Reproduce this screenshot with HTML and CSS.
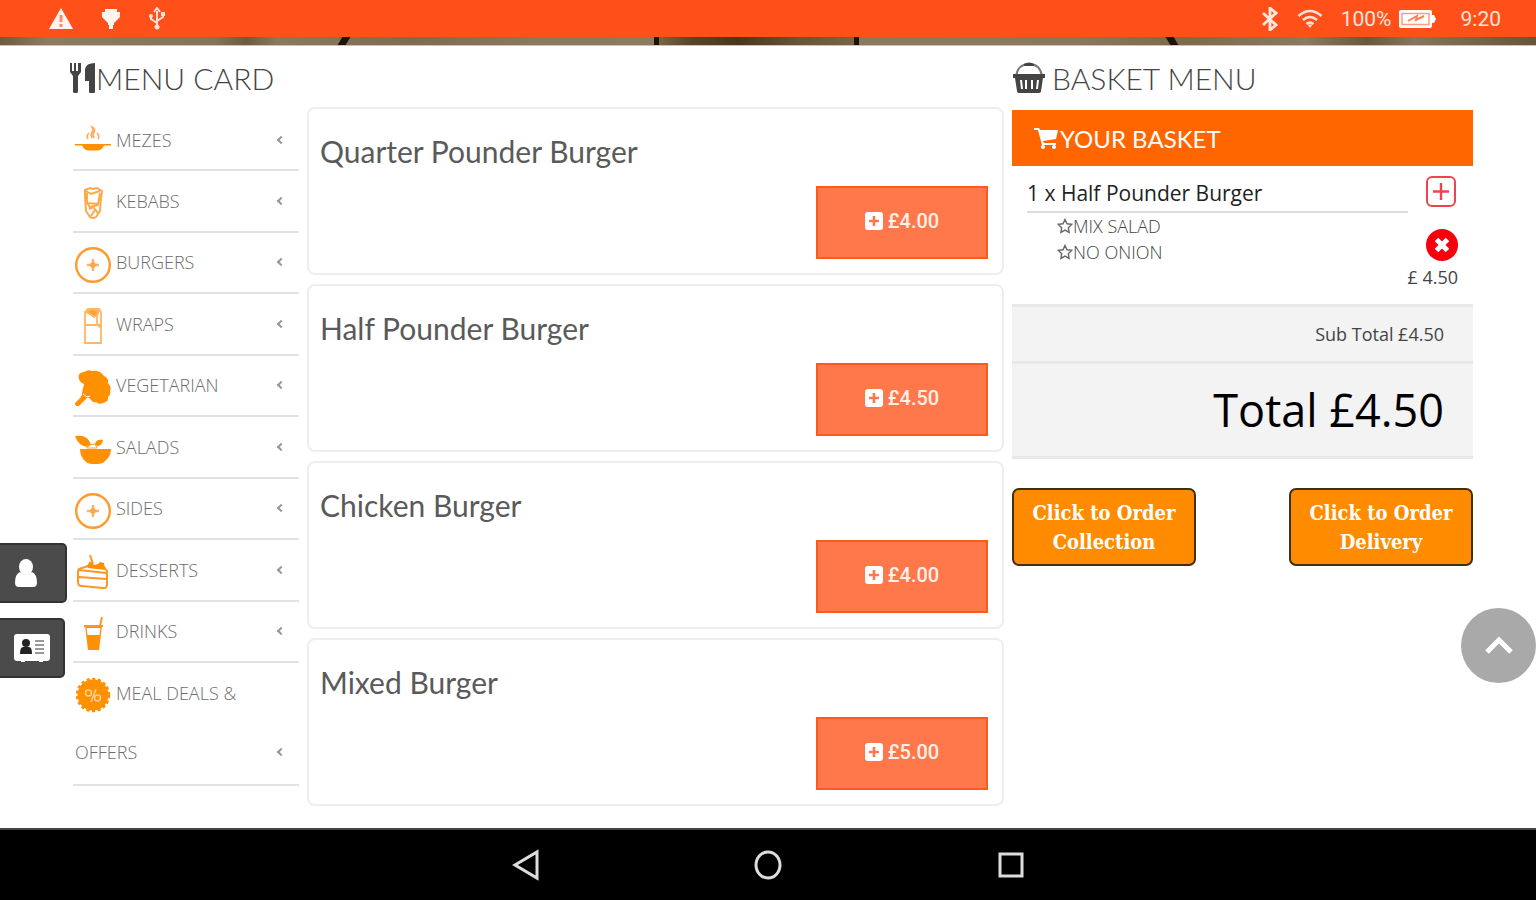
FILE: index.html
```html
<!DOCTYPE html>
<html lang="en">
<head>
  <meta charset="UTF-8">
  <meta name="viewport" content="width=device-width, initial-scale=1.0">
  <title>Menu Card</title>
  <link rel="stylesheet" href="styles.css">
</head>
<body>
  <!-- Shared icons -->
  <svg class="sprite" aria-hidden="true">
    <symbol id="icon-add" viewBox="0 0 18 18">
      <path fill-rule="evenodd" d="M3 0h12a3 3 0 0 1 3 3v12a3 3 0 0 1-3 3H3a3 3 0 0 1-3-3V3a3 3 0 0 1 3-3zM7.700 4v3.700H4v2.600h3.700V14h2.600v-3.700H14V7.700h-3.700V4z"/>
    </symbol>
    <symbol id="icon-circle-plus" viewBox="0 0 36 36">
      <circle cx="18" cy="18" r="16.800" fill="none" stroke="#ff9a2e" stroke-width="2.400"/>
      <path d="M18 12v12M12 18h12" stroke="#ffb566" stroke-width="2.600"/>
      <path d="M18 14l4 4-4 4-4-4z" fill="#ffa94d"/>
    </symbol>
    <symbol id="icon-star" viewBox="0 0 16 16">
      <path d="M8 1.500l2 4.300 4.700.6-3.400 3.300.8 4.700L8 12.100l-4.100 2.300.8-4.700L1.300 6.400 6 5.800z" fill="none" stroke="#666" stroke-width="1.400"/>
    </symbol>
  </svg>

  <header class="status-bar">
    <div class="status-left">
      <svg width="26" height="24" viewBox="0 0 26 24"><path d="M13 1l12 21H1z" fill="#fff4f0"/><path d="M13 8v7M13 17v3" stroke="#ff8a66" stroke-width="3"/></svg>
      <svg width="18" height="24" viewBox="0 0 18 24"><path d="M3 2h12v3h3v5l-6 6v2h-1v4H7v-4H6v-2l-6-6V5h3z" fill="#fff4f0"/></svg>
      <svg width="18" height="24" viewBox="0 0 18 24" fill="none" stroke="#ffe3d9" stroke-width="2"><path d="M9 20V4M6 5l3-4 3 4M3 8v4l6 4M15 6v4l-6 4"/><circle cx="9" cy="20" r="2.500" fill="#ffe3d9" stroke="none"/><circle cx="3" cy="9" r="2" fill="#ffe3d9" stroke="none"/><path d="M13 5h4v4h-4z" fill="#ffe3d9" stroke="none"/></svg>
    </div>
    <div class="status-right">
      <svg width="18" height="24" viewBox="0 0 18 24"><path d="M2 6l13 12-6 5V1l6 5L2 18" fill="none" stroke="#ffe9e1" stroke-width="2.800"/></svg>
      <svg width="26" height="20" viewBox="0 0 26 20" fill="none" stroke="#ffe3d9" stroke-width="2.600"><path d="M1.500 7Q13-3 24.500 7M6 11q7-6 14 0M9.500 15q3.500-3 7 0"/><path d="M10.500 15.500h5L13 19z" fill="#ffe3d9" stroke="none"/></svg>
      <span class="battery">100%
        <svg width="39" height="20" viewBox="0 0 39 20"><path d="M3 1h29a2 2 0 0 1 2 2v3h2l2 4-2 4h-2v3a2 2 0 0 1-2 2H3a2 2 0 0 1-2-2V3a2 2 0 0 1 2-2z" fill="#fff"/><path d="M4 4.500h27v11H4z" fill="none" stroke="#ff9c7d" stroke-width="1.500"/><path d="M10 12l9-5-1 4 8-4" stroke="#ff7f55" stroke-width="2" fill="none"/></svg>
      </span>
      <span class="clock">9:20</span>
    </div>
  </header>
  <div class="wood">
    <i class="plank-gap left"></i><i class="plank-gap right"></i>
  </div>

  <main class="page">
    <section class="menu">
      <h2 class="section-title">
        <svg width="26" height="30" viewBox="0 0 26 30" fill="#444"><path d="M0 0h2v8h2V0h2v8h2V0h3v9l-3 4v15a2 2 0 0 1-5 0V13L0 9z"/><path d="M25 0v28a2 2 0 0 1-6 0V18h-4V6q1-6 10-6z"/></svg>MENU CARD
      </h2>
      <nav>
        <ul class="menu-list">
          <li><a href="#">
            <svg class="menu-icon" viewBox="0 0 36 36"><path d="M0 20h36v1.600H0zM7 21.600h22q-2 5-7 5h-8q-5 0-7-5z" fill="#ff9100"/><path d="M13 15q-2-3 1-6M17 14q-2-5 1-7 0-2-1-4 4 2 2 5-2 3 0 6M23 15q2-3-1-6" fill="none" stroke="#ffab57" stroke-width="1.600"/></svg>
            <span>MEZES</span><b class="arrow"></b></a></li>
          <li><a href="#">
            <svg class="menu-icon" viewBox="0 0 36 36" fill="none" stroke="#ffa94d" stroke-width="2"><path d="M10 5l5-2 3 1 4-1 5 3-1 7-1 13-4 6q-3 2-6 0l-4-6-1-13zM11 6l5 3 9-3M12 18l12 1M12 8v10l3 4 8-2 2-12M14 24l4-2 5 6M16 31l4-6"/></svg>
            <span>KEBABS</span><b class="arrow"></b></a></li>
          <li><a href="#">
            <svg class="menu-icon"><use href="#icon-circle-plus"/></svg>
            <span>BURGERS</span><b class="arrow"></b></a></li>
          <li><a href="#">
            <svg class="menu-icon" viewBox="0 0 36 36" fill="none" stroke="#ffb763" stroke-width="1.800"><path d="M10 17V4l3-3h11l2 3v31H10zM10 17h16M22 7v9l4 4"/><path d="M11 4l5-3 8 2-2 4-3 2-4-3z" fill="#ffa32f"/></svg>
            <span>WRAPS</span><b class="arrow"></b></a></li>
          <li><a href="#">
            <svg class="menu-icon" viewBox="0 0 36 36" fill="#ff9100"><path d="M4 9q-2-6 5-7 4-3 8-1 8-1 12 5 5 2 4 7 4 4 2 8 1 4-2 6 1 5-5 6-4 2-7-1-3 1-5-2l-3-3-8 8q-2 2-4 1-2-2 0-4 7-6 6-9l2-9q-4-1-5-5z"/><path d="M8 24l4 3 3-1" stroke="#fff" fill="none"/></svg>
            <span>VEGETARIAN</span><b class="arrow"></b></a></li>
          <li><a href="#">
            <svg class="menu-icon" viewBox="0 0 36 36" fill="#ff9100"><path d="M5 18h31q0 8-7 13-2 2-9 2t-9-2q-6-5-6-13z"/><path d="M0 5q13-2 16 9l-3 2Q3 15 0 5zM20 14q0-6 8-5-1 6-6 6z"/><path d="M13 14l7-1 2 4H12z" fill="none" stroke="#ffa32f"/></svg>
            <span>SALADS</span><b class="arrow"></b></a></li>
          <li><a href="#">
            <svg class="menu-icon"><use href="#icon-circle-plus"/></svg>
            <span>SIDES</span><b class="arrow"></b></a></li>
          <li><a href="#">
            <svg class="menu-icon" viewBox="0 0 36 36" fill="none" stroke="#ff9624" stroke-width="2"><path d="M4 15l9-3 16 1 3 4v14q-1 4-4 3L7 32q-4 0-4-4V17zM4 16l27 3M4 23l27 2"/><path d="M12 12l3-5 4 4 4-1 2-2 4 1 1 7-17-2z" fill="#ff9100" stroke="none"/><path d="M18 10L15 1"/></svg>
            <span>DESSERTS</span><b class="arrow"></b></a></li>
          <li><a href="#">
            <svg class="menu-icon" viewBox="0 0 36 36"><path d="M10 10h17l-3 24H13z" fill="#ff9100"/><path d="M11.500 12h14l-1 7h-12z" fill="#fff"/><path d="M9 10h19M25 10l2-9" fill="none" stroke="#ff9624" stroke-width="2"/></svg>
            <span>DRINKS</span><b class="arrow"></b></a></li>
          <li class="tall"><a href="#">
            <svg class="menu-icon" viewBox="0 0 36 36"><circle cx="18" cy="18" r="15.500" fill="#ff9100"/><circle cx="18" cy="18" r="16" fill="none" stroke="#ff9100" stroke-width="2.500" stroke-dasharray="3.200 2.500"/><path d="M21 12l-5 13" stroke="#ffd19b" stroke-width="1.500"/><circle cx="13.500" cy="16" r="3" fill="none" stroke="#ffd19b" stroke-width="1.500"/><circle cx="22.500" cy="21" r="3" fill="none" stroke="#ffd19b" stroke-width="1.500"/></svg>
            <span>MEAL DEALS &amp;</span>
            <span class="second">OFFERS</span><b class="arrow"></b></a></li>
        </ul>
      </nav>
    </section>

    <section class="products">
      <article class="product">
        <h3>Quarter Pounder Burger</h3>
        <button type="button" class="price"><svg><use href="#icon-add"/></svg>£4.00</button>
      </article>
      <article class="product">
        <h3>Half Pounder Burger</h3>
        <button type="button" class="price"><svg><use href="#icon-add"/></svg>£4.50</button>
      </article>
      <article class="product">
        <h3>Chicken Burger</h3>
        <button type="button" class="price"><svg><use href="#icon-add"/></svg>£4.00</button>
      </article>
      <article class="product">
        <h3>Mixed Burger</h3>
        <button type="button" class="price"><svg><use href="#icon-add"/></svg>£5.00</button>
      </article>
    </section>

    <aside class="basket">
      <h2 class="section-title">
        <svg width="34" height="32" viewBox="0 0 34 32"><path d="M4 14Q6 2 17 2t13 12" fill="none" stroke="#777" stroke-width="2"/><path d="M12 2q5-3 10 0v2H12z" fill="#444"/><path fill-rule="evenodd" d="M1 12h32v4h-2l-2 13q0 2-3 2H8q-3 0-3-2L3 16H1zM8 18l1 9h2l-1-9zM13 18v9h2v-9zM19 18v9h2v-9zM25 18l-1 9h2l1-9z" fill="#444"/></svg>
        BASKET MENU
      </h2>
      <h3 class="basket-head">
        <svg width="24" height="22" viewBox="0 0 24 22" fill="#fff"><path d="M0 1h5l1 2h18l-2 9-13 2 1 2h12v2H8L4 3H0z"/><circle cx="9" cy="20" r="2"/><circle cx="20" cy="20" r="2"/></svg>
        YOUR BASKET
      </h3>
      <div class="basket-item">
        <div class="item-text">
          <p class="item-name">1 x Half Pounder Burger</p>
          <ul class="item-options">
            <li><svg><use href="#icon-star"/></svg>MIX SALAD</li>
            <li><svg><use href="#icon-star"/></svg>NO ONION</li>
          </ul>
        </div>
        <div class="item-actions">
          <button type="button" aria-label="Add one"><svg width="32" height="32" viewBox="0 0 32 32" fill="none" stroke="#f0424f" stroke-width="2"><rect x="1" y="1" width="28" height="29" rx="5"/><path d="M15 7v17M7 15.500h16" stroke-width="2.400"/></svg></button>
          <button type="button" aria-label="Remove"><svg width="32" height="32" viewBox="0 0 32 32"><circle cx="16" cy="16" r="16" fill="#f5000c"/><path d="M10.500 10.500l11 11M21.500 10.500l-11 11" stroke="#fff" stroke-width="5"/></svg></button>
          <span class="item-price">£ 4.50</span>
        </div>
      </div>
      <div class="sub-total">Sub Total £4.50</div>
      <div class="total">Total £4.50</div>
      <div class="order-buttons">
        <button type="button">Click to Order Collection</button>
        <button type="button">Click to Order Delivery</button>
      </div>
    </aside>
  </main>

  <div class="side-tabs">
    <a href="#" aria-label="Account"><svg width="24" height="28" viewBox="0 0 24 28" fill="#fff"><ellipse cx="12" cy="8" rx="7" ry="8"/><path d="M6 13q6 5 12 0 5 2 5 11 0 4-4 4H5q-4 0-4-4 0-9 5-11z"/></svg></a>
    <a href="#" class="contact" aria-label="Contact"><svg width="36" height="28" viewBox="0 0 36 28"><path d="M3 0h30a3 3 0 0 1 3 3v21a3 3 0 0 1-3 3h-4v1h-4v-1H11v1H7v-1H3a3 3 0 0 1-3-3V3a3 3 0 0 1 3-3z" fill="#fff"/><circle cx="12" cy="9" r="4" fill="#222"/><path d="M6 20q0-7 3-7h6q3 0 3 7z" fill="#222"/><path d="M21 7h9M21 11h9M21 15h9M21 19h9" stroke="#999" stroke-width="2"/></svg></a>
  </div>
  <a href="#" class="to-top" aria-label="Back to top"><svg width="30" height="20" viewBox="0 0 30 20"><path d="M3 16L15 4l12 12" fill="none" stroke="#fff" stroke-width="5"/></svg></a>

  <footer class="nav-bar">
    <button type="button" aria-label="Back"><svg width="30" height="32" viewBox="0 0 30 32"><path d="M27 3v26L5 16z"/></svg></button>
    <button type="button" aria-label="Home"><svg width="30" height="32" viewBox="0 0 30 32"><ellipse cx="15" cy="16" rx="12" ry="13"/></svg></button>
    <button type="button" aria-label="Recent"><svg width="30" height="32" viewBox="0 0 30 32"><rect x="4" y="5" width="22" height="22"/></svg></button>
  </footer>
</body>
</html>
```
FILE: styles.css
```css
* {
  box-sizing: border-box;
}

body {
  margin: 0;
  min-height: 100vh;
  display: flex;
  flex-direction: column;
  background: #fff;
  color: #444;
  font-family: "Open Sans", sans-serif;
}

h2, h3, p, ul {
  margin: 0;
  padding: 0;
  font-weight: 400;
}

ul {
  list-style: none;
}

a {
  color: inherit;
  text-decoration: none;
}

button {
  cursor: pointer;
}

.sprite {
  position: absolute;
  width: 0;
  height: 0;
}

/* Status bar */
.status-bar {
  height: 37px;
  padding: 0 35px 0 48px;
  display: flex;
  align-items: center;
  justify-content: space-between;
  background: #ff5019;
  color: #ffe3d9;
  font: 21px Roboto, sans-serif;
}

.status-left, .status-right, .battery {
  display: flex;
  align-items: center;
}

.status-left {
  gap: 28px;
}

.status-right {
  gap: 18px;
}

.battery {
  gap: 6px;
}

.clock {
  margin-left: 6px;
}

.wood {
  height: 9px;
  display: flex;
  justify-content: space-between;
  padding: 0 360px 0 340px;
  border-bottom: 1px solid #c9c2b8;
  background: linear-gradient(90deg, #6f5a40, #8d7a61 3%, #85735c 14%, #6e5a41 16%, #8a7861 18%, #7f6b50 27%, #8b7860 35%, #8c7a62 42.6%, #1c130b 42.6%, #1c130b 42.9%, #7a6346 42.9%, #5a4329 45%, #4a3520 48%, #6a5338 52%, #7a6346 55.6%, #1c130b 55.6%, #1c130b 55.9%, #8b7860 55.9%, #8a775e 70%, #80694a 77%, #8a7963 85%, #6b573f 89%, #85745f 92%, #6a5439);
}

.plank-gap {
  width: 8px;
  background: #1c130b;
}

.plank-gap.left {
  transform: skewX(-30deg);
}

.plank-gap.right {
  transform: skewX(30deg);
}

/* Page columns */
.page {
  flex: 1;
  display: grid;
  grid-template-columns: 226fr 697fr 461fr;
  gap: 8px;
  align-items: start;
  padding: 0 63px 22px 73px;
}

.section-title {
  height: 64px;
  display: flex;
  align-items: center;
  gap: 6px;
  font: 300 30px Lato, sans-serif;
  white-space: nowrap;
}

.menu .section-title {
  gap: 0;
  margin-left: -3px;
}

/* Left menu */
.menu-list {
  display: grid;
  grid-template-rows: repeat(11, minmax(61px, 1fr));
  min-height: 676px;
}

.menu-list li {
  border-bottom: 2px solid #e2e2e2;
}

.menu-list .tall {
  grid-row: span 2;
}

.menu-list a {
  display: grid;
  grid-template-columns: 36px 1fr 10px;
  grid-auto-rows: 59px;
  align-items: center;
  column-gap: 5px;
  padding: 0 13px 0 2px;
  color: #6c6c6c;
  font-size: 18px;
  font-weight: 300;
}

.menu-icon {
  width: 36px;
  height: 36px;
  margin-top: 5px;
}

.menu-list .second {
  grid-column: 1 / 3;
  grid-row: 2;
}

.arrow {
  width: 6px;
  height: 6px;
  margin-left: 2px;
  border: solid #999;
  border-width: 0 0 2px 2px;
  transform: rotate(45deg);
}

.tall .arrow {
  grid-column: 3;
  grid-row: 2;
}

/* Products */
.products {
  display: flex;
  flex-direction: column;
  gap: 9px;
  padding-top: 61px;
}

.product {
  display: flex;
  flex-direction: column;
  align-items: flex-end;
  gap: 17px;
  padding: 24px 14px 14px 11px;
  border: 2px solid #eee;
  border-radius: 8px;
}

.product h3 {
  align-self: stretch;
  font: 30px/36px Lato, sans-serif;
  color: #5a5a5a;
}

.price {
  width: 172px;
  height: 73px;
  display: flex;
  align-items: center;
  justify-content: center;
  gap: 5px;
  padding: 0 0 4px;
  border: 2px solid #ff5a1c;
  background: #ff784c;
  color: #fff0ea;
  font: 500 20px Roboto, sans-serif;
}

.price svg {
  width: 18px;
  height: 18px;
  fill: #fff;
}

/* Basket */
.basket-head {
  height: 56px;
  display: flex;
  align-items: center;
  gap: 2px;
  padding-left: 22px;
  background: #ff6600;
  color: #fff;
  font: 24px Lato, sans-serif;
}

.basket-item {
  display: flex;
  min-height: 138px;
  padding: 10px 15px 10px 15px;
}

.item-text {
  flex: 1;
}

.item-name {
  border-bottom: 2px solid #ddd;
  color: #222;
  font-size: 21px;
  line-height: 35px;
}

.item-options {
  padding-left: 30px;
  font-size: 18px;
  font-weight: 300;
  line-height: 26px;
}

.item-options li {
  display: flex;
  align-items: center;
}

.item-options svg {
  width: 16px;
  height: 16px;
}

.item-actions {
  width: 50px;
  display: flex;
  flex-direction: column;
  align-items: flex-end;
}

.item-actions button {
  height: 32px;
  margin-bottom: 21px;
  padding: 0;
  border: 0;
  background: none;
}

.item-actions button + button {
  margin-bottom: 4px;
}

.item-price {
  font-size: 18px;
  line-height: 24px;
  white-space: nowrap;
}

.sub-total, .total {
  padding-right: 29px;
  border-top: 3px solid #e8e8e8;
  background: #f3f3f3;
  text-align: right;
}

.sub-total {
  font-size: 18px;
  line-height: 54px;
}

.total {
  border-bottom: 3px solid #e8e8e8;
  color: #000;
  font-size: 45px;
  line-height: 92px;
}

.order-buttons {
  display: flex;
  justify-content: space-between;
  margin-top: 29px;
}

.order-buttons button {
  width: 184px;
  height: 78px;
  padding: 2px 12px 0;
  border: 2px solid #40300f;
  border-radius: 7px;
  background: #ff8c00;
  color: #fff;
  font: bold 20px/29px "DejaVu Serif Condensed", "DejaVu Serif", serif;
}

/* Floating tabs */
.side-tabs {
  position: fixed;
  left: 0;
  top: 543px;
}

.side-tabs a {
  width: 67px;
  height: 60px;
  display: flex;
  align-items: center;
  margin-bottom: 15px;
  padding-left: 14px;
  border: 2px solid #333;
  border-left: 0;
  border-radius: 0 5px 5px 0;
  background: #4b4b4b;
}

.side-tabs .contact {
  width: 65px;
}

.to-top {
  position: fixed;
  right: 0;
  top: 608px;
  width: 75px;
  height: 75px;
  display: flex;
  align-items: center;
  justify-content: center;
  border-radius: 50%;
  background: #a9a9a9;
}

/* Bottom bar */
.nav-bar {
  height: 72px;
  display: flex;
  align-items: center;
  justify-content: center;
  gap: 213px;
  border-top: 2px solid #444;
  background: #000;
}

.nav-bar button {
  padding: 0;
  border: 0;
  background: none;
  line-height: 0;
}

.nav-bar svg {
  fill: none;
  stroke: #ddd;
  stroke-width: 3;
}
```
